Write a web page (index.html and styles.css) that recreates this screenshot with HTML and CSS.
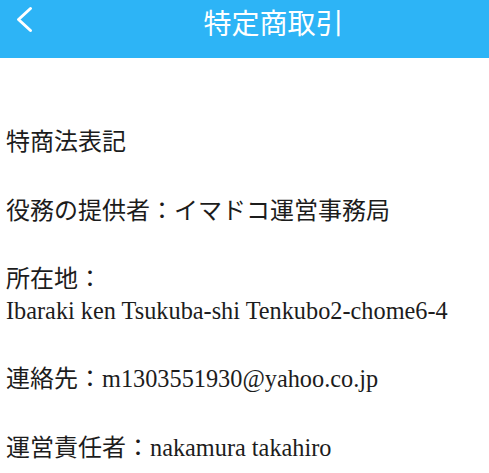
FILE: index.html
```html
<!DOCTYPE html>
<html lang="ja">
<head>
<meta charset="utf-8">
<title>特定商取引</title>
<link rel="stylesheet" href="styles.css">
</head>
<body>
<header class="navbar">
  <button class="back" aria-label="戻る">
    <svg width="20" height="28" viewBox="0 0 20 28"><path d="M15.5 2.5 L3.5 13.5 L15.5 24.5" fill="none" stroke="#fff" stroke-width="3" stroke-linecap="round" stroke-linejoin="round"/></svg>
  </button>
  <h1 class="title">特定商取引</h1>
</header>
<main class="content">
  <p class="item">特商法表記</p>
  <p class="item">役務の提供者：イマドコ運営事務局</p>
  <p class="item item-address">所在地：<br><span class="latin">Ibaraki ken Tsukuba-shi Tenkubo2-chome6-4</span></p>
  <p class="item">連絡先：<span class="latin">m1303551930@yahoo.co.jp</span></p>
  <p class="item">運営責任者：<span class="latin">nakamura takahiro</span></p>
</main>
</body>
</html>
```
FILE: styles.css
```css
html, body {
  margin: 0;
  padding: 0;
  background: #ffffff;
}
body {
  width: 489px;
  height: 473px;
  overflow: hidden;
  font-family: "Liberation Serif", "Noto Sans CJK JP", serif;
  color: #1c1c1c;
}
.navbar {
  display: flex;
  align-items: flex-start;
  height: 58px;
  background: #2db4f6;
}
.back {
  width: 58px;
  height: 40px;
  padding: 0 0 0 15px;
  margin: 0;
  border: 0;
  background: transparent;
  display: flex;
  align-items: center;
  justify-content: flex-start;
}
.back svg { display: block; }
.title {
  flex: 1;
  margin: 0;
  text-align: center;
  font-family: "Noto Sans CJK JP", sans-serif;
  font-weight: 400;
  font-size: 28px;
  line-height: 44px;
  color: #ffffff;
}
.content {
  display: flex;
  flex-direction: column;
  gap: 35px;
  padding: 67px 0 0 6px;
}
.item {
  margin: 0;
  font-size: 24px;
  line-height: 34px;
}
.item-address {
  line-height: 32px;
}
.latin {
  font-size: 24.3px;
}
```
